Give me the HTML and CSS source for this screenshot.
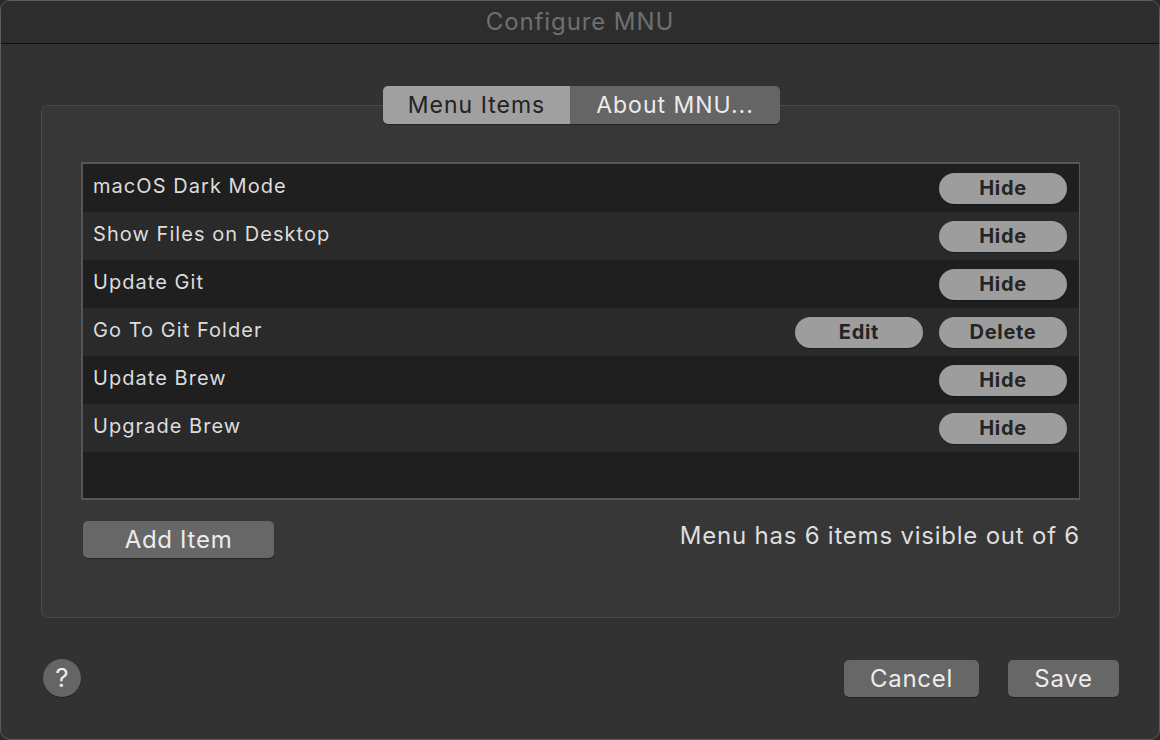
FILE: index.html
```html
<!DOCTYPE html>
<html>
<head>
<meta charset="utf-8">
<link rel="stylesheet" href="styles.css">
</head>
<body>
<div class="window">
  <div class="titlebar">Configure MNU</div>
  <div class="content">
    <div class="tabbox">
      <div class="segmented">
        <div class="seg seg-active">Menu Items</div>
        <div class="seg seg-inactive">About MNU...</div>
      </div>
      <div class="table">
        <div class="row odd"><span class="label">macOS Dark Mode</span><span class="actions"><button class="pill">Hide</button></span></div>
        <div class="row even"><span class="label">Show Files on Desktop</span><span class="actions"><button class="pill">Hide</button></span></div>
        <div class="row odd"><span class="label">Update Git</span><span class="actions"><button class="pill">Hide</button></span></div>
        <div class="row even"><span class="label">Go To Git Folder</span><span class="actions"><button class="pill">Edit</button><button class="pill">Delete</button></span></div>
        <div class="row odd"><span class="label">Update Brew</span><span class="actions"><button class="pill">Hide</button></span></div>
        <div class="row even"><span class="label">Upgrade Brew</span><span class="actions"><button class="pill">Hide</button></span></div>
        <div class="row odd filler"></div>
      </div>
      <div class="under">
        <button class="btn add">Add Item</button>
        <span class="status">Menu has 6 items visible out of 6</span>
      </div>
    </div>
    <div class="footer">
      <button class="help">?</button>
      <div class="footer-buttons">
        <button class="btn cancel">Cancel</button>
        <button class="btn save">Save</button>
      </div>
    </div>
  </div>
</div>
</body>
</html>
```

FILE: styles.css
```css
* { box-sizing: border-box; }
html, body { margin: 0; padding: 0; background: #2a2a2a; }
body {
  width: 1160px;
  height: 740px;
  font-family: Inter, "Noto Sans", "Liberation Sans", sans-serif;
  overflow: hidden;
}
.window {
  width: 1160px;
  height: 740px;
  background: #323232;
  border: 1px solid #5c5c5c;
  border-radius: 10px;
  overflow: hidden;
  display: flex;
  flex-direction: column;
}
.titlebar {
  height: 43px;
  flex: none;
  background: #2d2d2d;
  border-bottom: 1px solid #101010;
  color: #6f6f6f;
  font-size: 24px;
  letter-spacing: 0.9px;
  text-align: center;
  line-height: 42px;
}
.content {
  flex: 1;
  padding: 61px 39px 0 40px;
  display: flex;
  flex-direction: column;
}
.tabbox {
  height: 513px;
  background: #373737;
  border: 1px solid #4a4a4a;
  border-radius: 7px;
  padding: 0 39px 0 39px;
  display: flex;
  flex-direction: column;
}
.segmented {
  align-self: center;
  margin-top: -20px;
  margin-left: 2px;
  display: flex;
  height: 38px;
  border-radius: 5px;
  overflow: hidden;
  box-shadow: 0 1px 1px rgba(0,0,0,0.35);
}
.seg {
  font-size: 23px;
  letter-spacing: 1px;
  line-height: 38px;
  text-align: center;
}
.seg-active {
  width: 187px;
  background: #a0a0a0;
  color: #222;
}
.seg-inactive {
  width: 210px;
  background: #656565;
  color: #ececec;
}
.table {
  margin-top: 38px;
  height: 338px;
  border: 2px solid #565656;
  border-right-width: 1px;
  background: #1e1e1e;
  display: flex;
  flex-direction: column;
}
.row {
  height: 48px;
  flex: none;
  display: flex;
  align-items: center;
  justify-content: space-between;
  padding: 0 12px 0 10px;
}
.row.odd { background: #1f1f1f; }
.row.even { background: #2a2a2a; }
.row.filler { flex: 1; }
.label {
  color: #dcdcdc;
  font-size: 20px;
  letter-spacing: 1.05px;
  margin-top: -4px;
}
.actions {
  display: flex;
  gap: 16px;
}
.pill {
  width: 128px;
  height: 31px;
  border: none;
  border-radius: 16px;
  background: #9d9d9d;
  color: #242424;
  font-family: inherit;
  font-weight: 700;
  font-size: 20px;
  letter-spacing: 0.7px;
  padding: 0;
  line-height: 31px;
  box-shadow: 0 1px 1px rgba(0,0,0,0.3);
}
.under {
  margin-top: 19px;
  display: flex;
  justify-content: space-between;
  align-items: center;
  padding-left: 2px;
}
.btn {
  height: 37px;
  border: none;
  border-radius: 5px;
  background: #676767;
  color: #ececec;
  font-family: inherit;
  font-size: 24px;
  letter-spacing: 0.7px;
  padding: 0;
  box-shadow: 0 1px 1px rgba(0,0,0,0.35);
}
.add { width: 191px; margin-top: 2px; }
.status {
  color: #dedede;
  font-size: 24px;
  letter-spacing: 0.78px;
  margin-top: -6px;
}
.footer {
  margin-top: 41px;
  display: flex;
  justify-content: space-between;
  align-items: center;
  padding-left: 2px;
  padding-right: 1px;
}
.help {
  width: 38px;
  height: 38px;
  border-radius: 50%;
  border: none;
  background: #656565;
  color: #ededed;
  font-family: inherit;
  font-size: 26px;
  padding: 0;
  line-height: 38px;
  box-shadow: 0 1px 1px rgba(0,0,0,0.3);
}
.footer-buttons {
  display: flex;
  gap: 29px;
}
.cancel { width: 135px; }
.save { width: 111px; }
```
